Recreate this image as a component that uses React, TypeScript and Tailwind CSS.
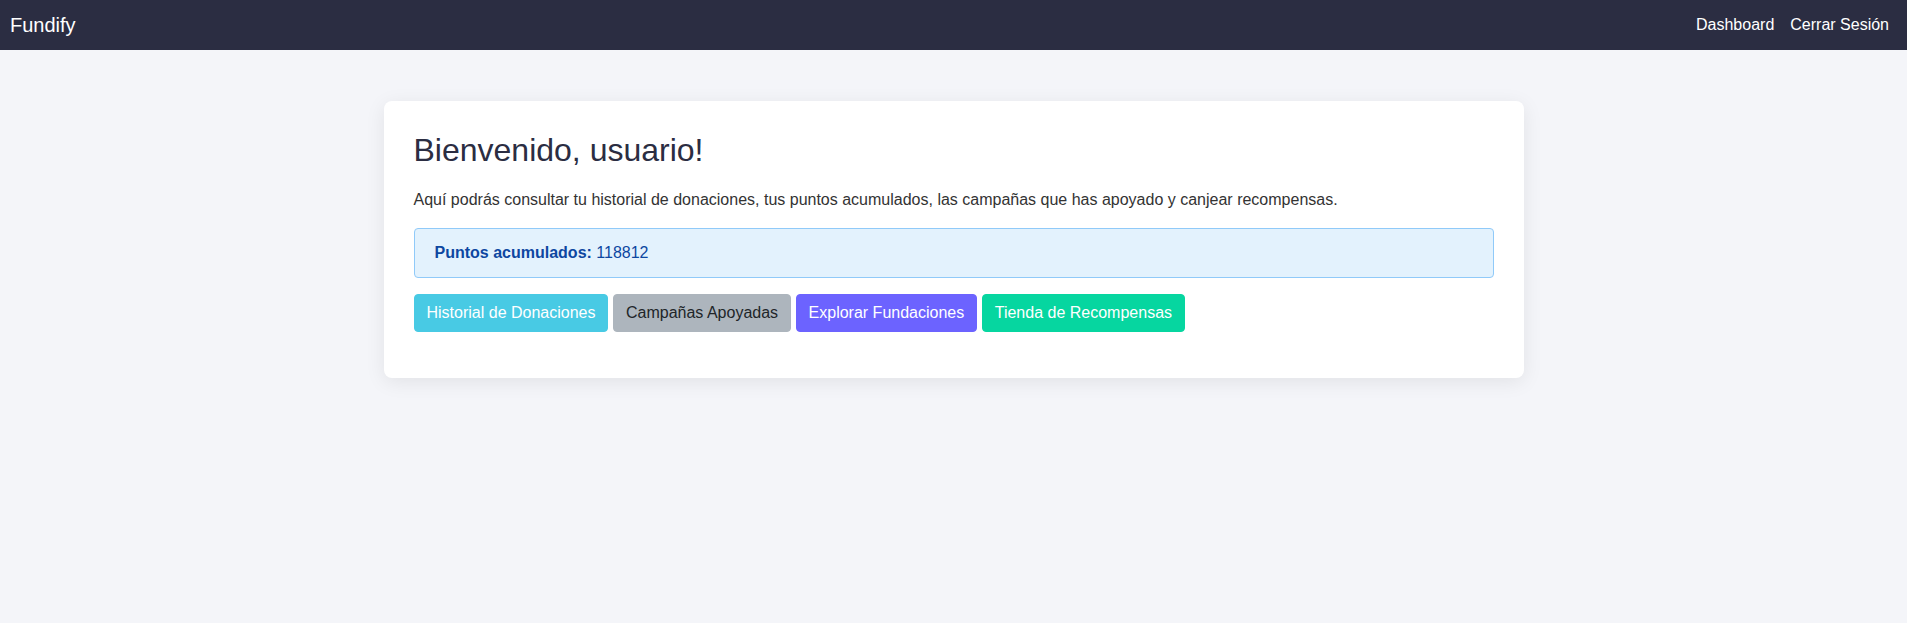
import React from 'react';

const buttons = [
  { label: 'Historial de Donaciones', cls: 'bg-[#48cae4] border-[#48cae4] text-white' },
  { label: 'Campañas Apoyadas', cls: 'bg-[#adb5bd] border-[#adb5bd] text-[#212529]' },
  { label: 'Explorar Fundaciones', cls: 'bg-[#6c63ff] border-[#6c63ff] text-white' },
  { label: 'Tienda de Recompensas', cls: 'bg-[#06d6a0] border-[#06d6a0] text-white' },
];

const App: React.FC = () => {
  return (
    <div className="min-h-[623px] bg-[#f4f5f9] font-['Liberation_Sans',Arial,sans-serif] text-[#333333]">
      {/* navbar */}
      <nav className="h-[50px] bg-[#2b2d42] flex items-center justify-between px-[10px]">
        <span className="text-white text-[20px] leading-[30px]">Fundify</span>
        <div className="flex items-center">
          <a className="text-white text-[16px] leading-6 px-2">Dashboard</a>
          <a className="text-white text-[16px] leading-6 px-2">Cerrar Sesión</a>
        </div>
      </nav>

      <div className="flex justify-center pt-[51px]">
        <div className="w-[1140px] bg-white rounded-lg shadow-[0_4px_20px_rgba(0,0,0,0.08)] p-[30px]">
          <h2 className="text-[32px] leading-[1.2] text-[#2b2d42] mb-[19px]">Bienvenido, usuario!</h2>
          <p className="text-[16px] leading-6 mb-4">
            Aquí podrás consultar tu historial de donaciones, tus puntos acumulados, las campañas que has apoyado y canjear recompensas.
          </p>
          <div className="bg-[#e3f2fd] border border-[#90caf9] text-[#0d47a1] rounded-[4px] px-5 py-3 text-[16px] leading-6 mb-4">
            <strong className="font-bold">Puntos acumulados:</strong> 118812
          </div>
          <div className="flex gap-[4.5px] mb-4">
            {buttons.map((b) => (
              <button
                key={b.label}
                className={`border rounded-[4px] px-3 py-1.5 text-[16px] leading-6 ${b.cls}`}
              >
                {b.label}
              </button>
            ))}
          </div>
        </div>
      </div>
    </div>
  );
};

export default App;
